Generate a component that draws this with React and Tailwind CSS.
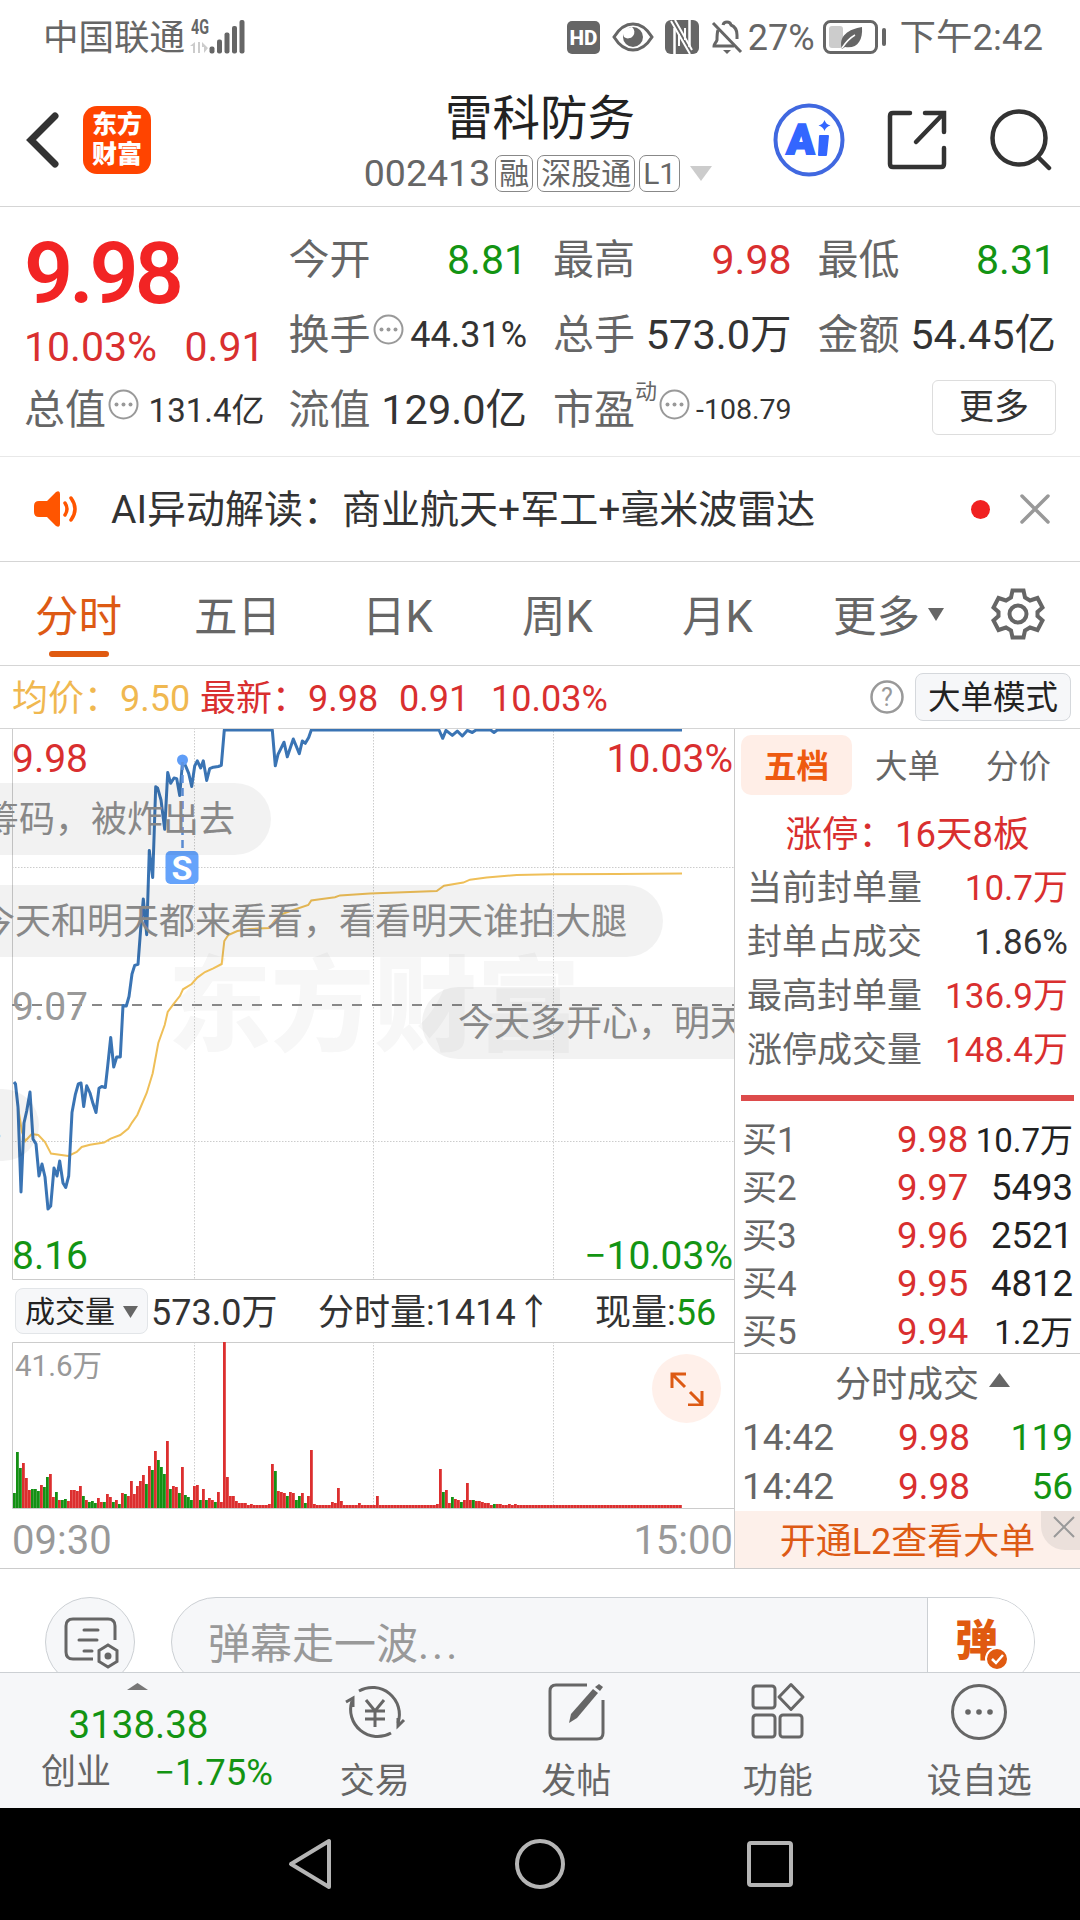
import clsx from 'clsx';

const PRICE_POINTS = [
  [14, 354], [15.5, 356], [18, 379], [21, 464], [24, 395], [26.7, 383], [30, 364], [33, 411], [36, 416], [39, 448],
  [42, 436], [45, 449], [48, 481], [50.7, 478], [54, 440], [57, 448], [59.7, 433], [63, 455], [65.7, 459.5], [68.7, 448],
  [72, 384.5], [75.3, 366.7], [78.3, 356], [81, 355], [83.7, 378.5], [86.7, 357.8], [90, 365], [93, 375.6], [96, 384.5],
  [99, 360.3], [101.7, 358.5], [105.3, 359.5], [107.7, 338], [110.7, 309.5], [113.7, 339], [116.7, 329], [120.3, 329],
  [123, 277.4], [126.3, 278], [129, 268.5], [132, 246], [134.7, 237.4], [138, 236.3], [140.7, 200.6], [143.3, 171],
  [146.7, 206.7], [149.3, 122.4], [152.7, 149.5], [155.7, 58.8], [157.7, 60.3], [161, 72], [164.7, 101.3], [167.7, 44.5],
  [170.7, 55.3], [174, 50], [176.7, 50.6], [179.7, 67.4], [182.7, 31.7], [186, 38.8], [188.7, 45.3], [191.7, 58.5],
  [194.7, 38], [197.3, 32.8], [200.7, 40], [203.3, 32.8], [206.7, 52.4], [209.7, 40.6], [213.3, 39.2], [218.3, 38.5],
  [221.3, 37.4], [224.3, 2], [272.3, 2], [275.3, 37.8], [278, 26.3], [281, 20.3], [284, 14.2], [287.3, 28.8], [293.3, 11],
  [299.3, 25.6], [302.3, 13], [305.3, 15.3], [308.7, 9.6], [311.3, 2], [439, 2], [442.7, 10.3], [446, 2.4], [452.3, 7.4],
  [457.3, 3.1], [462.3, 8], [467.3, 2.4], [472.3, 4.5], [476, 2], [490.7, 2], [494, 4.5], [497.3, 2], [682, 2],
];

const AVG_POINTS = [
  [18, 379], [22, 404], [25.3, 413], [31.7, 406], [38.3, 407], [45, 414], [51, 425.6], [68.3, 428], [76.7, 424],
  [81.7, 419], [90, 416.7], [104, 414.6], [110.7, 410.6], [120.3, 407], [128.3, 400.6], [132, 394.6], [137.3, 387],
  [140.7, 379], [146.7, 365], [152.7, 345.3], [158.3, 315], [164.7, 297], [167.7, 284], [173.3, 276.3], [180, 267.8],
  [183, 261.3], [191.7, 256], [197.3, 249.6], [205, 244], [213.3, 240.3], [221.7, 236], [224.3, 213], [228.3, 207],
  [237.3, 203], [250, 201], [269.3, 200], [275, 192.4], [283.3, 185.6], [293.3, 182], [308.3, 177], [311.3, 172.4],
  [320, 171.3], [335, 169.2], [340, 167.4], [370, 165.6], [436.7, 163], [444, 157.8], [463.3, 154.6], [470, 151.7],
  [486.7, 149.6], [516.7, 147], [553, 146.3], [616.7, 146], [682, 145.6],
];

// one entry per minute: bar height, negative = falling
const VOLUMES = [
  -15, -56, -40, 45, 30, 18, -19, -19, -17, 23, -21, -31, 34, 11, -16, 8, -8, -9, 7, 18, 18, 17, 22, -12, 8, -6, -7, -5,
  10, 6, -6, 14, 11, -6, 8, -4, 15, -14, 12, 27, 14, 22, 27, 33, -24, 42, -38, 57, -48, -41, -34, 67, -19, 22, 21, -15,
  41, -13, -11, -8, 22, 23, -8, 19, -8, 10, 8, -6, 16, 6, 166, 31, 12, 12, 7, 5, 5, 5, 3, 4, 3, 3, 3, 3, 3, 4, 44, -37,
  17, 16, 15, -12, 16, 15, -8, -12, 15, -5, 12, 58, 4, 3, 3, 3, 3, 3, 6, 5, 20, 7, 3, 3, 3, 3, 3, 5, 3, 3, 3, 3, 3, 12,
  3, 3, 3, 3, 3, 3, 3, 3, 3, 3, 3, 3, 3, 3, 3, 3, 3, 3, 3, 4, 39, -16, 18, 5, -11, 9, 8, -6, 8, 25, 8, -8, 7, 7, 6, 5, 5,
  3, -4, 4, 4, 3, 3, 4, 3, 4, ...Array(55).fill(3),
];

const TABS = ['分时', '五日', '日K', '周K', '月K'];

const LIMIT_STATS = [
  { label: '当前封单量', value: '10.7万', up: true },
  { label: '封单占成交', value: '1.86%', up: false },
  { label: '最高封单量', value: '136.9万', up: true },
  { label: '涨停成交量', value: '148.4万', up: true },
];

const BIDS = [
  { label: '买1', price: '9.98', volume: '10.7万' },
  { label: '买2', price: '9.97', volume: '5493' },
  { label: '买3', price: '9.96', volume: '2521' },
  { label: '买4', price: '9.95', volume: '4812' },
  { label: '买5', price: '9.94', volume: '1.2万' },
];

const TRADES = [
  { time: '14:42', price: '9.98', volume: '119' },
  { time: '14:42', price: '9.98', volume: '56' },
];

const toPoints = (list) => list.map((p) => p.join(',')).join(' ');

const StatusBar = () => (
  <div className="flex h-[74px] items-center justify-between pr-[37px] pl-[43px] text-[36px] leading-none text-[#666]">
    <div className="flex items-center">
      <span className="pt-[3px] text-[35.500px]">中国联通</span>
      <svg width="58" height="36" viewBox="0 0 58 36" className="ml-[3px]">
        <text x="3" y="15" fontSize="20" fontWeight="700" textLength="18" lengthAdjust="spacingAndGlyphs" fill="#666">4G</text>
        <path d="M2 27l5-4v11h-2v-7zM10 23h2v11h-2zM14 23l6 6-4 5v-6h-2z" fill="#ccc" />
        <g fill="#666">
          <rect x="21.5" y="27.500" width="5" height="7" rx="2" />
          <rect x="29" y="20.500" width="5" height="14" rx="2" />
          <rect x="36.500" y="13.500" width="5" height="21" rx="2" />
          <rect x="44" y="7" width="5" height="27.500" rx="2" />
          <rect x="51.500" y="1" width="5" height="33.500" rx="2" />
        </g>
      </svg>
    </div>
    <div className="flex items-center">
      <svg width="33" height="33" viewBox="0 0 33 33">
        <rect width="33" height="33" rx="5" fill="#666" />
        <text x="16.500" y="24" fontSize="21" fontWeight="800" textAnchor="middle" textLength="28" lengthAdjust="spacingAndGlyphs" fill="#fff">HD</text>
      </svg>
      <svg width="42" height="30" viewBox="0 0 42 30" className="ml-3">
        <path d="M2 15Q10 2 21 2t19 13Q32 28 21 28T2 15z" fill="none" stroke="#666" strokeWidth="3" />
        <circle cx="21" cy="15" r="10" fill="#666" />
        <path d="M20 5a6 6 0 0 1-8 10l-2-7z" fill="#fff" />
      </svg>
      <svg width="34" height="34" viewBox="0 0 34 34" className="ml-[11px]">
        <rect width="34" height="34" rx="6" fill="#666" />
        <path d="M9.500 34V8M24.500 0v27" stroke="#fff" strokeWidth="2.500" />
        <path d="M6 1l19 33M10 0l17 30M14 14v12M20 8v12" stroke="#fff" strokeWidth="2" />
      </svg>
      <svg width="32" height="36" viewBox="0 0 32 36" className="ml-3">
        <g fill="none" stroke="#666" strokeWidth="3">
          <path d="M12 6c1-4 7-4 8 0 5 2 6 6 6 10v4M7 11c-1 3-1 7-1 10-1 3-3 4-3 6h20" />
          <path d="M2 4l28 29" />
        </g>
        <path d="M12 31h8l-4 4z" fill="#666" />
      </svg>
      <span className="ml-[5px] pt-0.5">27%</span>
      <svg width="64" height="34" viewBox="0 0 64 34" className="ml-2">
        <rect x="1.500" y="1.500" width="52" height="31" rx="6" fill="none" stroke="#666" strokeWidth="3" />
        <rect x="6" y="6" width="14" height="22" rx="3" fill="#ccc" />
        <path d="M39 7c1 14-5 22-17 20l-3 2c-4-13 7-20 20-22z" fill="#666" />
        <path d="M19 28q6-9 13-13" stroke="#fff" strokeWidth="1.500" fill="none" />
        <rect x="59" y="8" width="4" height="18" rx="2" fill="#666" />
      </svg>
      <span className="ml-[13px] pt-[3px] text-[36.500px]">下午2:42</span>
    </div>
  </div>
);

const Tag = ({ children }) => (
  <span className="flex h-[37px] items-center rounded-[7px] border border-[#888] px-[3px] pt-px text-[30px] leading-none">{children}</span>
);

const Header = () => (
  <header className="grid h-[133px] grid-cols-[1fr_auto_1fr] items-center border-b border-[#d5d5d5] pr-7 pl-6">
    <div className="flex items-center">
      <svg width="36" height="60" viewBox="0 0 36 60">
        <path d="M31 6L7 30l24 24" fill="none" stroke="#333" strokeWidth="7" strokeLinecap="round" strokeLinejoin="miter" />
      </svg>
      <div className="ml-[23px] flex size-[68px] flex-col items-center justify-center rounded-[14px] bg-[#ff4400] text-[25px] leading-[30px] font-black text-white">
        <span>东方</span>
        <span>财富</span>
      </div>
    </div>
    <div className="flex flex-col items-center gap-2">
      <h1 className="pt-[3px] pl-1 text-[47.500px] leading-[55px] text-[#222]">雷科防务</h1>
      <div className="flex h-[37px] items-center text-[#666]">
        <span className="pt-0.5 text-[37.500px] leading-none">002413</span>
        <div className="ml-[5px] flex gap-1">
          <Tag>融</Tag>
          <Tag>深股通</Tag>
          <Tag>L1</Tag>
        </div>
        <svg width="22" height="15" viewBox="0 0 22 15" className="ml-2.5">
          <path d="M0 0h22L11 15z" fill="#ccc" />
        </svg>
      </div>
    </div>
    <div className="flex items-center justify-end">
      <svg width="72" height="74" viewBox="0 0 72 74">
        <ellipse cx="36" cy="37" rx="33.500" ry="34.500" fill="none" stroke="#4068e0" strokeWidth="4" />
        <text x="13" y="51" fontSize="42" fontWeight="900" fill="#3366ff" stroke="#3366ff" strokeWidth="2" textLength="28" lengthAdjust="spacingAndGlyphs" transform="skewX(-3) translate(3 0)">A</text>
        <path d="M47 33h8l-2 19h-7z" fill="#3366ff" stroke="#3366ff" strokeWidth="2" strokeLinejoin="round" />
        <path d="M51.500 17q1.500 4.500 6 5.500-4.500 1-6 5.500-1.500-4.500-6-5.500 4.500-1 6-5.500z" fill="#3366ff" />
      </svg>
      <svg width="60" height="60" viewBox="0 0 60 60" className="ml-[42px]" fill="none" stroke="#333" strokeWidth="4.500" strokeLinecap="round">
        <path d="M23 3H6Q3 3 3 6v48q0 3 3 3h48q3 0 3-3V38" />
        <path d="M38 3h19v19M56 4L29 32" />
      </svg>
      <svg width="62" height="62" viewBox="0 0 62 62" className="ml-[43px]" fill="none" stroke="#333" strokeWidth="4.500" strokeLinecap="round">
        <circle cx="29" cy="29" r="26.500" />
        <path d="M48 48l11 11" />
      </svg>
    </div>
  </header>
);

const Dots = () => (
  <svg width="31" height="31" viewBox="0 0 31 31" className="mb-[11px] ml-0.5 shrink-0">
    <circle cx="15.500" cy="15.500" r="14" fill="none" stroke="#999" strokeWidth="2" />
    <g fill="#999">
      <circle cx="8.500" cy="15.500" r="2" />
      <circle cx="15.500" cy="15.500" r="2" />
      <circle cx="22.500" cy="15.500" r="2" />
    </g>
  </svg>
);

const Quote = ({ label, value, dots, className = 'text-[41.500px] text-[#333]' }) => (
  <div className="flex h-[75px] items-center justify-between pt-[3px] leading-none whitespace-nowrap">
    <span className="flex items-center text-[41px] text-[#666]">
      {label}
      {dots && <Dots />}
    </span>
    <span className={className}>{value}</span>
  </div>
);

const QuotePanel = () => (
  <section className="grid h-[250px] grid-cols-4 gap-[26px] border-b border-[#e8e8e8] px-6 pt-[14px]">
    <div>
      <div className="flex h-[88px] items-center pt-[17px] text-[86px] leading-none font-semibold tracking-[-4px] text-[#f22424]">9.98</div>
      <div className="-mr-0.5 flex h-[75px] items-center justify-between pt-0.5 text-[41px] leading-none text-[#d92f2f]">
        <span>10.03%</span>
        <span>0.91</span>
      </div>
      <div className="-mt-[13px] -mr-0.5">
        <Quote label="总值" dots value="131.4亿" className="text-[33px] text-[#333]" />
      </div>
    </div>
    <div>
      <Quote label="今开" value="8.81" className="text-[41px] text-[#139413]" />
      <Quote label="换手" dots value="44.31%" className="text-[36px] text-[#333]" />
      <Quote label="流值" value="129.0亿" />
    </div>
    <div>
      <Quote label="最高" value="9.98" className="text-[41px] text-[#d92f2f]" />
      <Quote label="总手" value="573.0万" />
      <Quote
        label={<>市盈<span className="mb-9 text-[22px]">动</span></>}
        dots
        value="-108.79"
        className="text-[28.500px] text-[#333]"
      />
    </div>
    <div>
      <Quote label="最低" value="8.31" className="text-[41px] text-[#139413]" />
      <Quote label="金额" value="54.45亿" />
      <div className="flex h-[72px] items-center justify-end">
        <button className="h-[55px] w-[124px] rounded-md border border-[#ddd] text-[35px] leading-none text-[#333]">更多</button>
      </div>
    </div>
  </section>
);

const Notice = () => (
  <section className="flex h-[105px] items-center border-b border-[#d5d5d5] pr-[29px] pl-[33px]">
    <svg width="46" height="38" viewBox="0 0 46 38">
      <path d="M6 11h8L23 2q4-2 4 2v30q0 4-4 2l-9-9H6q-5 0-5-5v-6q0-5 5-5z" fill="#ff5500" />
      <path d="M32 13q4 6 0 12M38 8q8 11 0 22" fill="none" stroke="#ff5500" strokeWidth="3.500" strokeLinecap="round" />
    </svg>
    <p className="ml-8 flex-1 pt-[3px] text-[39px] leading-none text-[#333]">AI异动解读：商业航天+军工+毫米波雷达</p>
    <span className="size-[19px] rounded-full bg-[#f02020]" />
    <svg width="32" height="32" viewBox="0 0 32 32" className="ml-[29px]">
      <path d="M3 3l26 26M29 3L3 29" stroke="#999" strokeWidth="3.500" strokeLinecap="round" />
    </svg>
  </section>
);

const ChartTabs = () => (
  <nav className="flex h-[104px] border-b border-[#d5d5d5] text-[43.500px] leading-none text-[#666]">
    {TABS.map((tab, i) => (
      <div key={tab} className={clsx('flex w-40 flex-col items-center pt-[34px]', i === 0 ? 'pr-[3px] text-[#dd5a14]' : 'pr-[5px]')}>
        {tab}
        {i === 0 && <span className="mt-[11px] h-1.5 w-[60px] rounded-full bg-[#e05a10]" />}
      </div>
    ))}
    <div className="flex w-[177px] justify-center gap-2 pt-[34px]">
      更多
      <svg width="16" height="13" viewBox="0 0 16 13" className="mt-[12px]">
        <path d="M0 0h16L8 13z" fill="#666" />
      </svg>
    </div>
    <svg width="54" height="54" viewBox="0 0 54 54" className="mt-[25px] ml-[14px]" fill="none" stroke="#666" strokeWidth="4">
      <path d="M21.500 3.500h11l1.500 7 5 3 7.500-2.500 5 9.500-5 4.500v4l5 4.500-5 9.500-7.500-2.500-5 3-1.500 7h-11l-1.500-7-5-3-7.500 2.500-5-9.500 5-4.500v-4l-5-4.500 5-9.500 7.500 2.500 5-3z" />
      <circle cx="27" cy="27" r="8.500" />
    </svg>
  </nav>
);

const AverageRow = () => (
  <div className="flex h-[63px] items-center border-b border-[#d5d5d5] pr-[9px] pl-3 text-[36px] leading-none text-[#d92f2f]">
    <span className="w-[188px] pt-[3px] text-[#f0b850]">均价：9.50</span>
    <span className="w-[199px] pt-[3px]">最新：9.98</span>
    <span className="w-[92px] pt-[3px]">0.91</span>
    <span className="flex-1 pt-[3px]">10.03%</span>
    <svg width="34" height="34" viewBox="0 0 34 34">
      <circle cx="17" cy="17" r="15.500" fill="none" stroke="#999" strokeWidth="2.500" />
      <text x="17" y="26" fontSize="25" textAnchor="middle" fill="#999">?</text>
    </svg>
    <button className="ml-[11px] h-12 w-[156px] rounded-lg border border-[#d5d8dc] bg-[#f6f7f9] pt-[3px] text-[32.500px] leading-none text-[#222]">大单模式</button>
  </div>
);

const Danmaku = ({ children, className }) => (
  <div className={clsx('absolute flex h-[72px] items-center rounded-full bg-black/5 px-[36px] pt-0.5 text-[36px] leading-none whitespace-nowrap text-[#888]', className)}>
    {children}
  </div>
);

const PriceChart = () => (
  <div className="relative h-[551px] overflow-hidden">
    <svg width="734" height="551" viewBox="0 1 734 551">
      <text x="168" y="315" fontSize="103" fontWeight="800" fill="#f7f7f7">东方财富</text>
      <path d="M12.500 0v551.500H734" fill="none" stroke="#ccc" />
      <path d="M12 139.500h722M12 413.500h722M194.500 0v551M373.500 0v551M553.500 0v551" stroke="#ccc" strokeDasharray="1.500 1.500" />
      <path d="M12 277h722" stroke="#888" strokeWidth="2" strokeDasharray="10 10" />
      <polyline points={toPoints(AVG_POINTS)} fill="none" stroke="#efbf58" strokeWidth="2" />
      <polyline points={toPoints(PRICE_POINTS)} fill="none" stroke="#3a74b4" strokeWidth="3" strokeLinejoin="round" />
      <g fontSize="39">
        <text x="12" y="44" fill="#d92f2f">9.98</text>
        <text x="733" y="44" textAnchor="end" fill="#d92f2f">10.03%</text>
        <text x="12" y="292" fill="#999">9.07</text>
        <text x="12" y="541" fill="#139413">8.16</text>
        <text x="733" y="541" textAnchor="end" fill="#139413">−10.03%</text>
      </g>
      <circle cx="182.500" cy="32" r="5.500" fill="#5f9df7" />
      <path d="M182.500 34v88" stroke="#5f93dd" strokeWidth="2.500" strokeDasharray="8 5" />
      <rect x="165.500" y="123" width="33" height="33" rx="5" fill="#65a3fb" />
      <text x="182" y="151.500" fontSize="34" fontWeight="700" textAnchor="middle" fill="#fff">S</text>
    </svg>
    <Danmaku className="top-[54px] right-[463px]">抢筹码，被炸出去</Danmaku>
    <Danmaku className="top-[156px] right-[71px]">今天和明天都来看看，看看明天谁拍大腿</Danmaku>
    <Danmaku className="top-[258px] left-[422px]">今天多开心，明天</Danmaku>
    <Danmaku className="top-[360px] right-[695px]">.</Danmaku>
  </div>
);

const VolumeChart = () => (
  <div className="relative h-[167px]">
    <svg width="734" height="167" viewBox="0 0 734 167">
      <path d="M734 .5H12.500v166H734" fill="none" stroke="#ccc" />
      <path d="M194.500 0v166M373.500 0v166M553.500 0v166" stroke="#ccc" strokeDasharray="1.500 1.500" />
      {VOLUMES.map((v, i) => (
        <rect
          key={i}
          x={13 + i * 3}
          y={166 - Math.abs(v)}
          width="2.800"
          height={Math.abs(v)}
          fill={v > 0 ? '#dc2f2f' : '#149014'}
        />
      ))}
      <text x="15" y="34" fontSize="30" textLength="87" lengthAdjust="spacingAndGlyphs" fill="#999">41.6万</text>
    </svg>
    <button className="absolute top-[12px] right-[13px] flex size-[69px] items-center justify-center rounded-full bg-[#fff0ea]">
      <svg width="34" height="34" viewBox="0 0 34 34" fill="none" stroke="#dd5a14" strokeWidth="3">
        <path d="M2 16V2h14M2.500 2.500L15 15M32 19v14H18M31.500 31.500L20 20" />
      </svg>
    </button>
  </div>
);

const ChartColumn = () => (
  <div className="w-[735px] border-r border-[#ccc]">
    <PriceChart />
    <div className="flex h-[62px] items-center pl-[15px] text-[36px] leading-none text-[#333]">
      <button className="flex h-[46px] w-[133px] items-center justify-center gap-2 rounded-lg border border-[#e2e5e8] bg-[#f6f7f9] pt-0.5 text-[30px] text-[#222]">
        成交量
        <svg width="15" height="12" viewBox="0 0 15 12">
          <path d="M0 0h15L7.500 12z" fill="#666" />
        </svg>
      </button>
      <span className="ml-[3px] w-[167px] pt-[3px]">573.0万</span>
      <span className="w-[277px] pt-[3px]">分时量:1414↑</span>
      <span className="pt-[3px]">
        现量:<span className="text-[#139413]">56</span>
      </span>
    </div>
    <VolumeChart />
    <div className="flex h-[60px] items-center justify-between pt-1 pr-px pl-3 text-[40px] leading-none text-[#999]">
      <span>09:30</span>
      <span>15:00</span>
    </div>
  </div>
);

const OrderBook = () => (
  <aside className="flex flex-1 flex-col leading-none">
    <div className="flex pt-1.5 pl-1.5 text-[32.500px] text-[#666]">
      <span className="flex h-[60px] w-[111px] items-center justify-center rounded-[10px] bg-[#ffeee7] pt-[5px] font-bold text-[#ee5a10]">五档</span>
      <span className="flex h-[60px] w-[111px] items-center justify-center pt-[5px]">大单</span>
      <span className="flex h-[60px] w-[111px] items-center justify-center pt-[5px]">分价</span>
    </div>
    <div className="mt-3 flex h-[54px] items-center justify-center pt-0.5 text-[36.500px] text-[#d92f2f]">涨停：16天8板</div>
    {LIMIT_STATS.map((s) => (
      <div key={s.label} className="flex h-[54px] items-center justify-between pt-px pr-3 pl-[12px] text-[35px] text-[#666]">
        <span>{s.label}</span>
        <span className={s.up ? 'text-[#d92f2f]' : 'text-[#333]'}>{s.value}</span>
      </div>
    ))}
    <div className="mx-1.5 mt-[18px] h-1.5 bg-[#dd4b4b]" />
    <div className="h-[253px] border-b border-[#ccc] pt-[15px]">
      {BIDS.map((b) => (
        <div key={b.label} className="flex h-12 items-center px-[7px] pt-px text-[36.500px]">
          <span className="w-[155px] text-[35px] text-[#666]">{b.label}</span>
          <span className="text-[#d92f2f]">{b.price}</span>
          <span className={clsx('flex-1 text-right text-[#222]', b.volume.endsWith('万') && 'text-[33px]')}>{b.volume}</span>
        </div>
      ))}
    </div>
    <div className="flex h-[59px] items-center justify-center gap-2.5 pt-0.5 pl-[30px] text-[36px] text-[#666]">
      分时成交
      <svg width="21" height="14" viewBox="0 0 21 14" className="-mt-2.5">
        <path d="M0 14h21L10.500 0z" fill="#666" />
      </svg>
    </div>
    {TRADES.map((t) => (
      <div key={t.volume} className="flex h-[49px] items-center px-[7px] text-[37px]">
        <span className="w-[156px] text-[#666]">{t.time}</span>
        <span className="text-[#d92f2f]">{t.price}</span>
        <span className="flex-1 text-right text-[#139413]">{t.volume}</span>
      </div>
    ))}
    <div className="relative flex flex-1 items-center justify-center bg-[#fdf0ea] pt-[5px] text-[36px] text-[#dd5a14]">
      开通L2查看大单
      <span className="absolute top-0 right-0 flex size-[39px] items-center justify-center rounded-bl-[24px] bg-[#ebe0db] pb-2 pl-1.5">
        <svg width="22" height="22" viewBox="0 0 22 22">
          <path d="M1 1l20 20M21 1L1 21" stroke="#999" strokeWidth="2" />
        </svg>
      </span>
    </div>
  </aside>
);

const DanmakuInput = () => (
  <div className="flex h-[103px] overflow-hidden px-[45px] pt-7">
    <div className="flex size-[90px] shrink-0 items-center justify-center rounded-full border border-[#ccd0d4] bg-[#f6f7f9] pt-0.5 pl-1">
      <svg width="56" height="52" viewBox="0 0 56 52" fill="none" stroke="#666" strokeWidth="3">
        <path d="M51 23V9q0-7-7-7H9Q2 2 2 9v26q0 7 7 7h20" />
        <path d="M20 13h14M15 23h18M20 34h8" strokeLinecap="round" />
        <path d="M44 28l9 5.500v11L44 50l-9-5.500v-11z" />
        <circle cx="44" cy="39" r="2" fill="#666" />
      </svg>
    </div>
    <div className="ml-9 flex h-[90px] flex-1 overflow-hidden rounded-full border border-[#ccd0d4] bg-[#f6f7f9]">
      <span className="flex-1 pt-[26px] pl-9 text-[42px] leading-none text-[#999]">
        弹幕走一波<span className="tracking-[3px]">...</span>
      </span>
      <div className="relative w-[107px] border-l border-[#ccd0d4] bg-white pt-[22px] pl-[27px]">
        <span className="text-[43px] leading-none font-black text-[#e05a10]">弹</span>
        <svg width="24" height="24" viewBox="0 0 24 24" className="absolute top-[49px] left-[57px]">
          <circle cx="12" cy="12" r="11" fill="#e05a10" stroke="#fff" strokeWidth="2" />
          <path d="M7 12l4 4 7-8" fill="none" stroke="#fff" strokeWidth="2.500" />
        </svg>
      </div>
    </div>
  </div>
);

const NavItem = ({ label, children }) => (
  <div className="flex w-[201.500px] flex-col items-center pt-[9px] text-[35px] leading-none text-[#666]">
    <svg width="66" height="60" viewBox="0 0 66 60" fill="none" stroke="#666" strokeWidth="3">
      {children}
    </svg>
    <span className="mt-[22px]">{label}</span>
  </div>
);

const BottomNav = () => (
  <footer className="flex h-[136px] border-t border-[#ccd0d4] bg-[#f6f7f9]">
    <div className="flex w-[274px] shrink-0 flex-col items-center pt-2.5 leading-none">
      <svg width="21" height="7" viewBox="0 0 21 7">
        <path d="M0 7h21L10.500 0z" fill="#777" />
      </svg>
      <span className="mt-4 pl-[3px] text-[38.500px] text-[#139413]">3138.38</span>
      <div className="mt-[10px] flex w-full items-center justify-between pr-[1px] pl-[41px] text-[35px] text-[#666]">
        创业
        <span className="text-[36.500px] text-[#139413]">−1.75%</span>
      </div>
    </div>
    <NavItem label="交易">
      <path d="M17 9A27 27 0 0 1 56 41M49 51A27 27 0 0 1 10 19" />
      <path d="M4 20l7-4v9M62 38l-6 6v-8" />
      <path d="M24 18l9 11 9-11M23 29h20M23 37h20M33 29v16" />
    </NavItem>
    <NavItem label="发帖">
      <path d="M44 3H13Q7 3 7 9v42q0 6 6 6h41q6 0 6-6V18" />
      <path d="M28 32L50 7l5 4-21 25-8 5z" fill="#666" stroke="none" />
      <path d="M52 5l4-3 4 3-3 4z" fill="#666" stroke="none" />
    </NavItem>
    <NavItem label="功能">
      <rect x="8" y="4" width="22" height="22" rx="3" />
      <path d="M46 2.500L58 15 46 27.500 34 15z" strokeLinejoin="round" />
      <rect x="8" y="33" width="22" height="22" rx="3" />
      <rect x="35" y="33" width="22" height="22" rx="3" />
    </NavItem>
    <NavItem label="设自选">
      <circle cx="33" cy="30" r="26.500" />
      <g fill="#666" stroke="none">
        <circle cx="22" cy="30" r="2.800" />
        <circle cx="33" cy="30" r="2.800" />
        <circle cx="44" cy="30" r="2.800" />
      </g>
    </NavItem>
  </footer>
);

const SystemNav = () => (
  <div className="flex h-[112px] items-center justify-center gap-[181px] bg-black">
    <svg width="46" height="52" viewBox="0 0 46 52" fill="none" stroke="#b5b5b5" strokeWidth="4" strokeLinejoin="round">
      <path d="M42 3v46L4 26z" />
    </svg>
    <svg width="52" height="52" viewBox="0 0 52 52" fill="none" stroke="#b5b5b5" strokeWidth="4">
      <circle cx="26" cy="26" r="23" />
    </svg>
    <svg width="46" height="46" viewBox="0 0 46 46" fill="none" stroke="#b5b5b5" strokeWidth="4">
      <rect x="2" y="2" width="42" height="42" rx="2" />
    </svg>
  </div>
);

export default function App() {
  return (
    <div
      lang="zh-CN"
      className="flex h-[1920px] w-[1080px] flex-col overflow-hidden bg-white font-[family-name:Roboto,'Noto_Sans_CJK_SC',sans-serif]"
    >
      <StatusBar />
      <Header />
      <QuotePanel />
      <Notice />
      <ChartTabs />
      <AverageRow />
      <div className="flex h-[840px] border-b border-[#ccc]">
        <ChartColumn />
        <OrderBook />
      </div>
      <DanmakuInput />
      <BottomNav />
      <SystemNav />
    </div>
  );
}
